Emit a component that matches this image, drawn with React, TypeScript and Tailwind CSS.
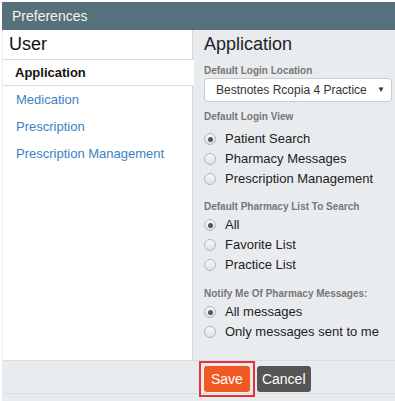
import { useState } from 'react'

const navItems = ['Application', 'Medication', 'Prescription', 'Prescription Management']

interface RadioGroupProps {
  name: string
  options: string[]
  value: string
  onChange: (v: string) => void
  className?: string
}

function RadioGroup({ name, options, value, onChange, className = '' }: RadioGroupProps) {
  return (
    <div className={`flex flex-col ${className}`}>
      {options.map((opt) => {
        const checked = opt === value
        return (
          <label
            key={opt}
            className="flex h-[20px] cursor-pointer items-center text-[13px] text-[#222]"
            onClick={() => onChange(opt)}
          >
            <input type="radio" name={name} className="hidden" readOnly checked={checked} />
            <span className="flex h-[12px] w-[12px] items-center justify-center rounded-full border border-[#b5b5b5] bg-gradient-to-b from-[#fafafa] to-[#e0e0e0]">
              {checked && <span className="h-[5px] w-[5px] rounded-full bg-[#555]" />}
            </span>
            <span className="ml-[9px]">{opt}</span>
          </label>
        )
      })}
    </div>
  )
}

function FieldLabel({ children, className = '' }: { children: string; className?: string }) {
  return (
    <div className={`text-[10px] leading-[14px] font-bold text-[#777] ${className}`}>
      {children}
    </div>
  )
}

export default function App() {
  const [view, setView] = useState('Patient Search')
  const [list, setList] = useState('All')
  const [notify, setNotify] = useState('All messages')

  return (
    <div className="h-[401px] w-[395px] bg-white pl-[2px] pt-[2px] font-['Liberation_Sans',Arial,sans-serif]">
      <div className="flex h-full flex-col bg-[#e9ecef]">
        <div className="flex h-[28px] items-center bg-[#56707c] px-[10px] text-[14px] text-[#f4f4f4]">
          Preferences
        </div>

        <div className="flex h-[330px]">
          <div className="ml-[1px] flex w-[190px] flex-col border-r border-[#d6d6d6] bg-white">
            <div className="flex h-[30px] items-center border-b border-[#ddd] pl-[6px] text-[18px] text-[#111]">
              User
            </div>
            {navItems.map((item, i) =>
              i === 0 ? (
                <div
                  key={item}
                  className="-mr-[2px] flex h-[26px] items-center border-b border-[#ddd] bg-white pl-[12px] text-[13px] font-bold text-[#111]"
                >
                  {item}
                </div>
              ) : (
                <a
                  key={item}
                  href="#"
                  className="flex h-[27px] items-center pl-[13px] text-[13px] text-[#3b82c4]"
                >
                  {item}
                </a>
              )
            )}
          </div>

          <div className="flex-1 pl-[11px] pr-[3px]">
            <div className="pt-[2px] text-[18px] leading-[24px] text-[#222]">Application</div>

            <FieldLabel className="mt-[8px]">Default Login Location</FieldLabel>
            <div className="flex h-[24px] items-center justify-between rounded-[4px] border border-[#ccc] bg-white pl-[11px] pr-[6px] text-[12px] text-[#333]">
              <span>Bestnotes Rcopia 4 Practice</span>
              <span className="text-[8px] text-[#333]">▼</span>
            </div>

            <FieldLabel className="mt-[8px]">Default Login View</FieldLabel>
            <RadioGroup
              className="mt-[5px]"
              name="view"
              options={['Patient Search', 'Pharmacy Messages', 'Prescription Management']}
              value={view}
              onChange={setView}
            />

            <FieldLabel className="mt-[11px]">Default Pharmacy List To Search</FieldLabel>
            <RadioGroup
              className="mt-[1px]"
              name="list"
              options={['All', 'Favorite List', 'Practice List']}
              value={list}
              onChange={setList}
            />

            <FieldLabel className="mt-[12px]">Notify Me Of Pharmacy Messages:</FieldLabel>
            <RadioGroup
              className="mt-[1px]"
              name="notify"
              options={['All messages', 'Only messages sent to me']}
              value={notify}
              onChange={setNotify}
            />
          </div>
        </div>

        <div className="ml-[1px] flex h-[34px] gap-[7px] border-y border-[#dcdcdc] pl-[201px] pt-[5px]">
          <div className="-m-[5px] self-start border-2 border-[#e8313b] p-[3px]">
            <button className="block h-[26px] rounded-[3px] bg-[#f05a22] px-[7px] text-[14px] text-white">
              Save
            </button>
          </div>
          <button className="h-[26px] rounded-[3px] bg-[#555] px-[5px] text-[14px] text-white">
            Cancel
          </button>
        </div>
      </div>
    </div>
  )
}
